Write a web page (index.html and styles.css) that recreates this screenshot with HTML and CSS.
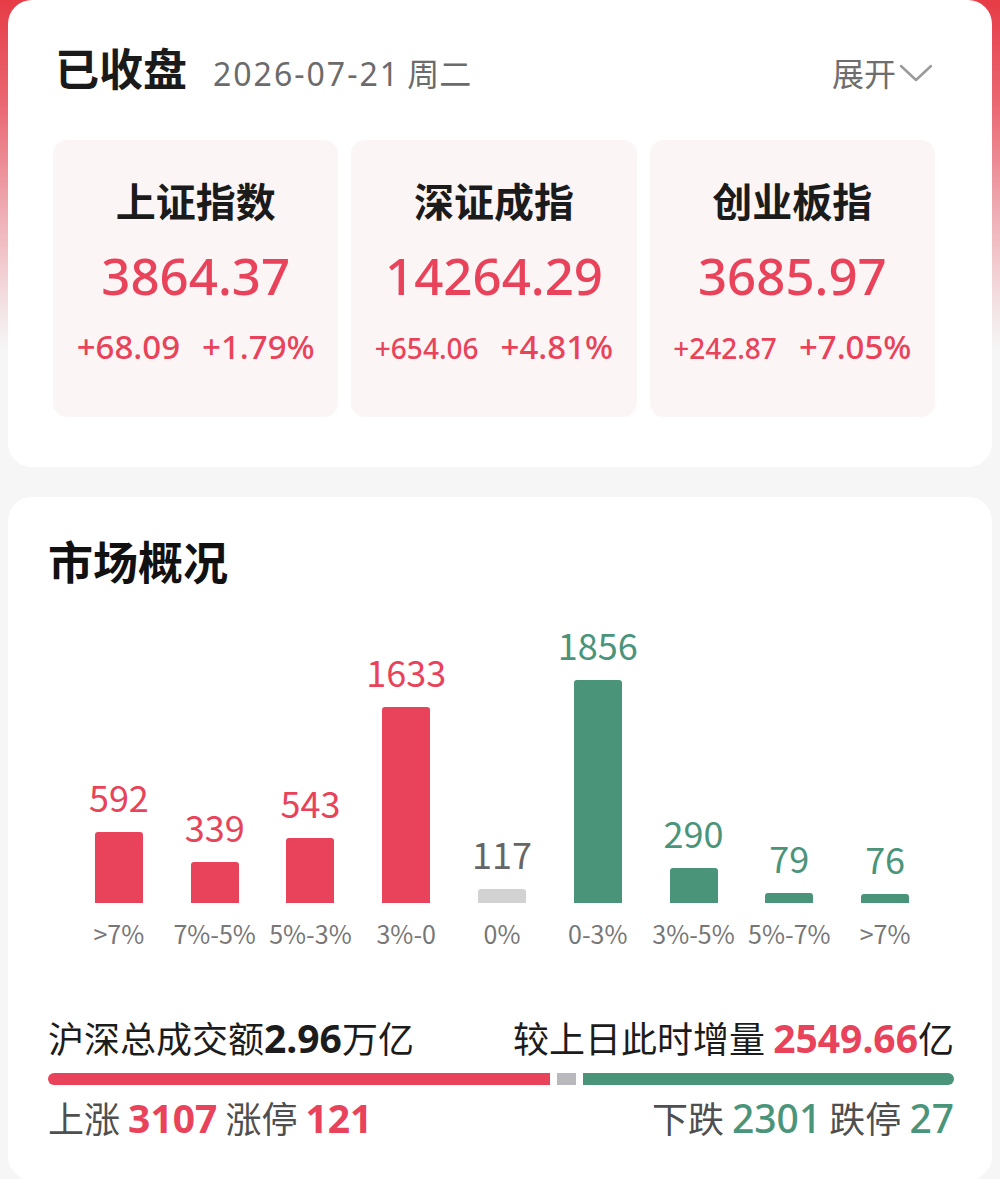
FILE: index.html
```html
<!DOCTYPE html>
<html lang="zh-CN">
<head>
<meta charset="utf-8">
<title>市场概况</title>
<link rel="stylesheet" href="styles.css">
</head>
<body>
<div class="page">
  <section class="card summary">
    <header class="summary-head">
      <h1 class="status">已收盘</h1>
      <span class="date"><span class="num">2026-07-21</span> 周二</span>
      <button class="toggle" type="button">展开<svg class="chevron" viewBox="0 0 34 18" width="34" height="18"><path d="M2 2 L17 16 L32 2" fill="none" stroke="#9a9a9a" stroke-width="2.4" stroke-linecap="round" stroke-linejoin="round"/></svg></button>
    </header>
    <div class="indices">
      <div class="index">
        <div class="index-name">上证指数</div>
        <div class="index-value">3864.37</div>
        <div class="index-change"><span>+68.09</span><span>+1.79%</span></div>
      </div>
      <div class="index">
        <div class="index-name">深证成指</div>
        <div class="index-value">14264.29</div>
        <div class="index-change"><span class="small">+654.06</span><span>+4.81%</span></div>
      </div>
      <div class="index">
        <div class="index-name">创业板指</div>
        <div class="index-value">3685.97</div>
        <div class="index-change"><span class="small">+242.87</span><span>+7.05%</span></div>
      </div>
    </div>
  </section>

  <section class="card overview">
    <h2 class="overview-title">市场概况</h2>
    <div class="dist">
      <div class="dist-col up"><span class="dist-num">592</span><span class="dist-bar" style="height:71px"></span></div>
      <div class="dist-col up"><span class="dist-num">339</span><span class="dist-bar" style="height:41px"></span></div>
      <div class="dist-col up"><span class="dist-num">543</span><span class="dist-bar" style="height:65px"></span></div>
      <div class="dist-col up"><span class="dist-num">1633</span><span class="dist-bar" style="height:196px"></span></div>
      <div class="dist-col flat"><span class="dist-num">117</span><span class="dist-bar" style="height:14px"></span></div>
      <div class="dist-col down"><span class="dist-num">1856</span><span class="dist-bar" style="height:223px"></span></div>
      <div class="dist-col down"><span class="dist-num">290</span><span class="dist-bar" style="height:35px"></span></div>
      <div class="dist-col down"><span class="dist-num">79</span><span class="dist-bar" style="height:10px"></span></div>
      <div class="dist-col down"><span class="dist-num">76</span><span class="dist-bar" style="height:9px"></span></div>
    </div>
    <div class="dist-axis">
      <span>&gt;7%</span><span>7%-5%</span><span>5%-3%</span><span>3%-0</span><span>0%</span><span>0-3%</span><span>3%-5%</span><span>5%-7%</span><span>&gt;7%</span>
    </div>

    <div class="turnover">
      <div>沪深总成交额<b class="num">2.96</b>万亿</div>
      <div>较上日此时增量 <b class="num rise">2549.66</b>亿</div>
    </div>
    <div class="ratio">
      <span class="seg seg-up" style="flex-grow:3107"></span>
      <span class="seg seg-flat" style="flex-grow:117"></span>
      <span class="seg seg-down" style="flex-grow:2301"></span>
    </div>
    <div class="counts">
      <div>上涨 <b class="num rise">3107</b> 涨停 <b class="num rise">121</b></div>
      <div>下跌 <span class="num fall">2301</span> 跌停 <span class="num fall">27</span></div>
    </div>
  </section>
</div>
</body>
</html>
```
FILE: styles.css
```css
* {
  box-sizing: border-box;
  margin: 0;
  padding: 0;
}

body {
  margin: 0;
  background: #f6f6f6;
  font-family: "Noto Sans CJK SC", "Noto Sans", sans-serif;
  color: #1b1b1b;
}

.num {
  font-family: "Noto Sans", "Noto Sans CJK SC", sans-serif;
}

.rise { color: #e8435a; }
.fall { color: #4a947a; }

.page {
  min-height: 1179px;
  padding: 0 8px;
  background: linear-gradient(180deg, #e63c46 0px, #ea6a75 110px, #efb1b8 220px, #f4e4e6 310px, #f6f6f6 350px);
}

.card {
  background: #fff;
  border-radius: 24px;
}

/* ---- closing summary ---- */
.summary {
  padding: 43px 57px 50px 45px;
}

.summary-head {
  display: flex;
  align-items: baseline;
  height: 48px;
  line-height: 48px;
}

.status {
  font-size: 44px;
  font-weight: 700;
  color: #1a1a1a;
  padding-left: 2px;
}

.date {
  margin-left: 26px;
  font-size: 32px;
  color: #6b6b6b;
}

.date .num {
  letter-spacing: 2px;
}

.toggle {
  margin-left: auto;
  margin-right: 2px;
  display: flex;
  align-items: center;
  border: 0;
  background: none;
  font-family: "Noto Sans CJK SC", sans-serif;
  font-size: 32px;
  line-height: 48px;
  color: #6e6e6e;
}

.chevron {
  margin-left: 3px;
  margin-top: 2px;
}

.indices {
  display: grid;
  grid-template-columns: repeat(3, 1fr);
  gap: 13px;
  margin-top: 49px;
}

.index {
  height: 277px;
  padding-top: 37px;
  border-radius: 14px;
  background: #fcf5f6;
  text-align: center;
}

.index-name {
  font-size: 40px;
  font-weight: 700;
  line-height: 46px;
  color: #1b1b1b;
}

.index-value {
  margin-top: 22px;
  font-family: "Noto Sans", sans-serif;
  font-size: 51px;
  font-weight: 500;
  line-height: 60px;
  color: #e8435a;
}

.index-change {
  display: flex;
  justify-content: center;
  align-items: baseline;
  gap: 22px;
  margin-top: 24px;
  font-family: "Noto Sans", sans-serif;
  font-size: 33px;
  font-weight: 500;
  line-height: 36px;
  color: #e8435a;
}

.index-change .small {
  font-size: 28px;
}

/* ---- market overview ---- */
.overview {
  margin-top: 30px;
  height: 683px;
  padding: 38px 38px 0 40px;
}

.overview-title {
  font-size: 45px;
  font-weight: 700;
  line-height: 52px;
  color: #111;
}

.dist {
  display: grid;
  grid-template-columns: repeat(9, 1fr);
  align-items: end;
  height: 316px;
  margin: 0 21px 0 23px;
}

.dist-col {
  display: flex;
  flex-direction: column;
  align-items: center;
  justify-content: flex-end;
}

.dist-num {
  font-size: 36px;
  line-height: 40px;
  margin-bottom: 16px;
}

.dist-bar {
  width: 48px;
  border-radius: 3px 3px 0 0;
}

.up .dist-num { color: #e8435a; }
.up .dist-bar { background: #e8435a; }
.flat .dist-num { color: #666; }
.flat .dist-bar { background: #d2d2d2; }
.down .dist-num { color: #4a947a; }
.down .dist-bar { background: #4a947a; }

.dist-axis {
  display: grid;
  grid-template-columns: repeat(9, 1fr);
  margin: 15px 21px 0 23px;
  font-size: 25px;
  line-height: 30px;
  color: #777;
  text-align: center;
}

.turnover {
  display: flex;
  justify-content: space-between;
  align-items: baseline;
  margin-top: 67px;
  font-size: 36px;
  line-height: 44px;
  color: #1c1c1c;
}

.turnover b {
  font-size: 39px;
  font-weight: 700;
}

.ratio {
  display: flex;
  gap: 7px;
  height: 12px;
  margin-top: 13px;
}

.seg {
  flex-basis: 0;
}

.seg-up {
  background: #e8435a;
  border-radius: 6px 0 0 6px;
}

.seg-flat {
  background: #b9b9bd;
}

.seg-down {
  background: #4a947a;
  border-radius: 0 6px 6px 0;
}

.counts {
  display: flex;
  justify-content: space-between;
  align-items: baseline;
  margin-top: 10px;
  font-size: 36px;
  line-height: 44px;
  color: #4f4f4f;
}

.counts .num {
  font-size: 39px;
}

.counts b {
  font-weight: 700;
}

.counts .fall {
  font-weight: 500;
}
```
